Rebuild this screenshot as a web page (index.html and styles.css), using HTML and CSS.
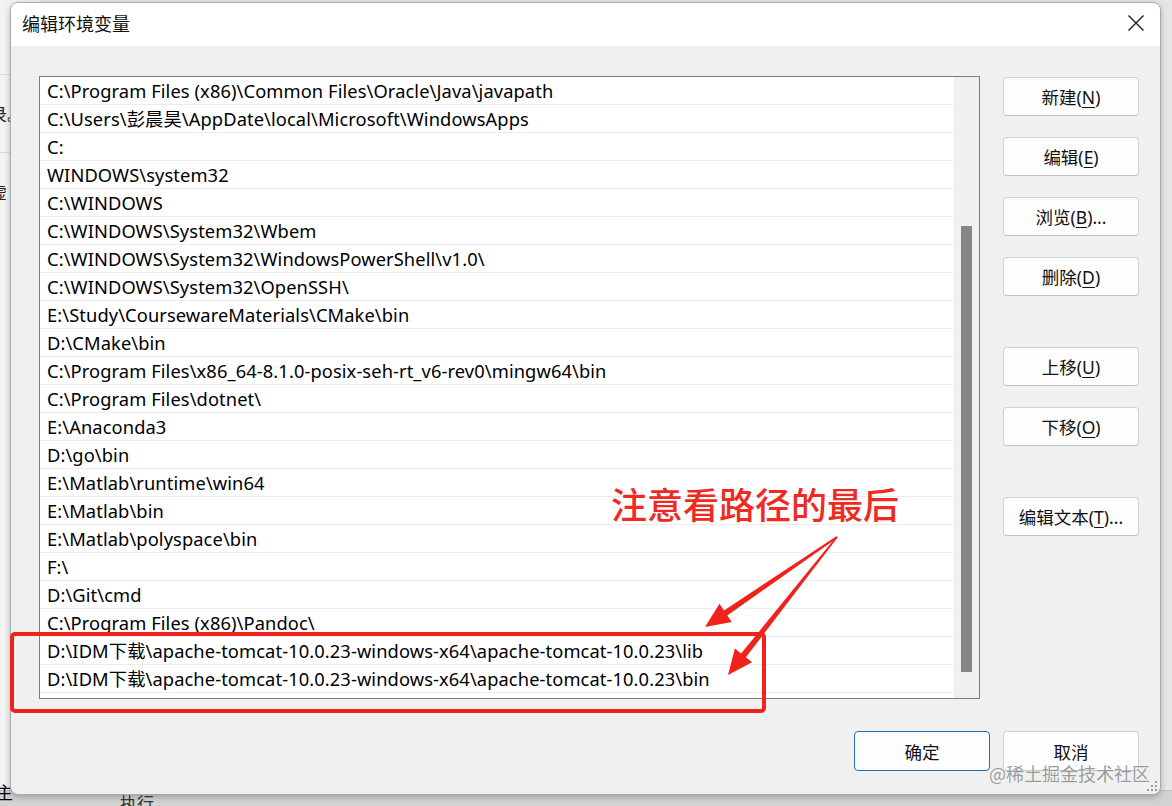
FILE: index.html
```html
<!DOCTYPE html>
<html lang="zh">
<head>
<meta charset="utf-8">
<title>编辑环境变量</title>
<link rel="stylesheet" href="styles.css">
</head>
<body>
<div class="desktop">
  <div class="bgwin">
    <div class="bg-left">
      <div class="bg-cell">录。</div>
      <div class="bg-cell">虚</div>
    </div>
    <div class="bg-bottom">
      <span class="bg-main">主</span>
      <span class="bg-run">执行</span>
    </div>
  </div>

  <div class="dialog">
    <div class="titlebar">
      <span class="title">编辑环境变量</span>
      <svg class="close" width="18" height="18" viewBox="0 0 18 18"><path d="M1.5 1.5 L16.5 16.5 M16.5 1.5 L1.5 16.5" stroke="#1b1b1b" stroke-width="1.4" fill="none"/></svg>
    </div>
    <div class="content">
      <div class="main">
        <div class="listbox">
          <div class="rows">
            <div class="row">C:\Program Files (x86)\Common Files\Oracle\Java\javapath</div>
            <div class="row">C:\Users\彭晨昊\AppDate\local\Microsoft\WindowsApps</div>
            <div class="row">C:</div>
            <div class="row">WINDOWS\system32</div>
            <div class="row">C:\WINDOWS</div>
            <div class="row">C:\WINDOWS\System32\Wbem</div>
            <div class="row">C:\WINDOWS\System32\WindowsPowerShell\v1.0\</div>
            <div class="row">C:\WINDOWS\System32\OpenSSH\</div>
            <div class="row">E:\Study\CoursewareMaterials\CMake\bin</div>
            <div class="row">D:\CMake\bin</div>
            <div class="row">C:\Program Files\x86_64-8.1.0-posix-seh-rt_v6-rev0\mingw64\bin</div>
            <div class="row">C:\Program Files\dotnet\</div>
            <div class="row">E:\Anaconda3</div>
            <div class="row">D:\go\bin</div>
            <div class="row">E:\Matlab\runtime\win64</div>
            <div class="row">E:\Matlab\bin</div>
            <div class="row">E:\Matlab\polyspace\bin</div>
            <div class="row">F:\</div>
            <div class="row">D:\Git\cmd</div>
            <div class="row">C:\Program Files (x86)\Pandoc\</div>
            <div class="row">D:\IDM下载\apache-tomcat-10.0.23-windows-x64\apache-tomcat-10.0.23\lib</div>
            <div class="row">D:\IDM下载\apache-tomcat-10.0.23-windows-x64\apache-tomcat-10.0.23\bin</div>
          </div>
          <div class="scroll"><div class="thumb"></div></div>
        </div>
        <div class="side">
          <div class="group">
            <button class="btn">新建(<u>N</u>)</button>
            <button class="btn">编辑(<u>E</u>)</button>
            <button class="btn">浏览(<u>B</u>)...</button>
            <button class="btn">删除(<u>D</u>)</button>
          </div>
          <div class="group">
            <button class="btn">上移(<u>U</u>)</button>
            <button class="btn">下移(<u>O</u>)</button>
          </div>
          <div class="group">
            <button class="btn">编辑文本(<u>T</u>)...</button>
          </div>
        </div>
      </div>
      <div class="footer">
        <button class="btn primary">确定</button>
        <button class="btn">取消</button>
      </div>
    </div>
    <div class="grip">
      <i></i><i></i><i></i><i></i><i></i><i></i>
    </div>
  </div>

  <div class="note">注意看路径的最后</div>
  <div class="redbox"></div>
  <svg class="arrows" width="1172" height="806" viewBox="0 0 1172 806">
    <polygon points="837.6,537.8 727.3,615.4 731.8,622.0 705,627 719.5,603.8 724.0,610.4 836.4,536.2" fill="#f0231c"/>
    <polygon points="837.6,537.5 745.9,657.3 752.1,662.2 728,675 734.9,648.6 741.1,653.5 836.4,536.5" fill="#f0231c"/>
  </svg>
  <div class="watermark">@稀土掘金技术社区</div>
</div>
</body>
</html>
```

FILE: styles.css
```css
* { box-sizing: border-box; }
html, body {
  margin: 0;
  padding: 0;
  width: 1172px;
  height: 806px;
  overflow: hidden;
  font-family: "Noto Sans", "Noto Sans CJK SC", sans-serif;
  color: #000;
}
.desktop {
  position: relative;
  width: 1172px;
  height: 806px;
  background: #cdcdcd;
  overflow: hidden;
}

/* background window, mostly hidden */
.bgwin {
  position: absolute;
  inset: 0;
  background: #e6e6e6;
}
.bg-left {
  position: absolute;
  left: 0;
  top: 0;
  width: 40px;
  height: 806px;
  background: #f3f3f3;
  display: flex;
  flex-direction: column;
  padding-top: 74px;
}
.bg-cell {
  height: 78px;
  border-top: 1px solid #dadada;
  font-family: "Noto Sans CJK SC", sans-serif;
  font-size: 17px;
  display: flex;
  align-items: center;
  margin-left: -10px;
  color: #222;
}
.bg-bottom {
  position: absolute;
  left: 0;
  top: 790px;
  width: 1172px;
  height: 16px;
  background: #d2d2d2;
  border-top: 1px solid #c0c0c0;
}
.bg-main {
  position: absolute;
  left: -4px;
  top: -12px;
  font-family: "Noto Sans CJK SC", sans-serif;
  font-size: 17px;
}
.bg-run {
  position: absolute;
  left: 120px;
  top: -1px;
  font-family: "Noto Sans CJK SC", sans-serif;
  font-size: 17px;
  color: #333;
}

/* dialog */
.dialog {
  position: absolute;
  left: 10px;
  top: 2px;
  width: 1151px;
  height: 793px;
  background: #f0f0f0;
  border-radius: 8px;
  border: 1px solid #a9a9a9;
  box-shadow: 0 2px 6px rgba(0,0,0,0.25);
  display: flex;
  flex-direction: column;
  overflow: hidden;
}
.titlebar {
  height: 43px;
  flex: none;
  background: #ffffff;
  display: flex;
  align-items: center;
  justify-content: space-between;
  padding: 0 15px 0 11px;
}
.title {
  font-family: "Noto Sans CJK SC", sans-serif;
  font-size: 18px;
  color: #111;
  margin-top: -4px;
}
.close { margin-top: -4px; }

.content {
  flex: 1;
  display: flex;
  flex-direction: column;
  padding: 30px 21px 0 28px;
}
.main {
  display: flex;
  gap: 23px;
}
.listbox {
  width: 941px;
  height: 623px;
  border: 1px solid #7c7c7c;
  background: #fff;
  display: flex;
}
.rows {
  flex: 1;
  display: flex;
  flex-direction: column;
}
.row {
  height: 28px;
  flex: none;
  border-bottom: 1px solid #ececec;
  padding-left: 7px;
  font-size: 18.3px;
  letter-spacing: 0.1px;
  line-height: 28px;
  white-space: nowrap;
  color: #000;
}
.scroll {
  width: 26px;
  flex: none;
  background: #f0f0f0;
  border-left: 1px solid #f7f7f7;
  padding-left: 7px;
}
.thumb {
  width: 11px;
  height: 446px;
  margin-top: 149px;
  background: #868686;
}

.side {
  display: flex;
  flex-direction: column;
  gap: 51px;
  padding-top: 1px;
}
.group {
  display: flex;
  flex-direction: column;
  gap: 21px;
}
.btn {
  width: 136px;
  height: 39px;
  border: 1px solid #d2d2d2;
  border-bottom-color: #c2c2c2;
  border-radius: 4px;
  background: #fdfdfd;
  font-family: "Noto Sans", "Noto Sans CJK SC", sans-serif;
  font-size: 17.5px;
  color: #111;
  padding: 0;
  display: flex;
  align-items: center;
  justify-content: center;
}
.btn u { text-underline-offset: 3px; }

.footer {
  display: flex;
  justify-content: flex-end;
  gap: 13px;
  margin-top: 32px;
}
.footer .btn { height: 40px; }
.primary {
  border: 1px solid #1a6fbf;
}

.grip {
  position: absolute;
  right: 3px;
  bottom: 3px;
  width: 12px;
  height: 12px;
}
.grip i {
  position: absolute;
  width: 2px;
  height: 2px;
  background: #9a9a9a;
}
.grip i:nth-child(1) { right: 0; bottom: 0; }
.grip i:nth-child(2) { right: 4px; bottom: 0; }
.grip i:nth-child(3) { right: 8px; bottom: 0; }
.grip i:nth-child(4) { right: 0; bottom: 4px; }
.grip i:nth-child(5) { right: 4px; bottom: 4px; }
.grip i:nth-child(6) { right: 0; bottom: 8px; }

/* annotation overlays */
.note {
  position: absolute;
  left: 611px;
  top: 481px;
  font-family: "Noto Sans CJK SC", sans-serif;
  font-size: 36px;
  font-weight: 500;
  line-height: 44px;
  color: #ee2a22;
  white-space: nowrap;
}
.redbox {
  position: absolute;
  left: 10px;
  top: 632px;
  width: 756px;
  height: 81px;
  border: 4px solid #f0231c;
  border-radius: 5px;
}
.arrows {
  position: absolute;
  left: 0;
  top: 0;
  pointer-events: none;
}
.watermark {
  position: absolute;
  left: 989px;
  top: 760px;
  font-family: "Noto Sans CJK SC", sans-serif;
  font-size: 18px;
  line-height: 26px;
  color: rgba(120,120,120,0.75);
  text-shadow: 0 0 1px #fff;
  white-space: nowrap;
}
```
